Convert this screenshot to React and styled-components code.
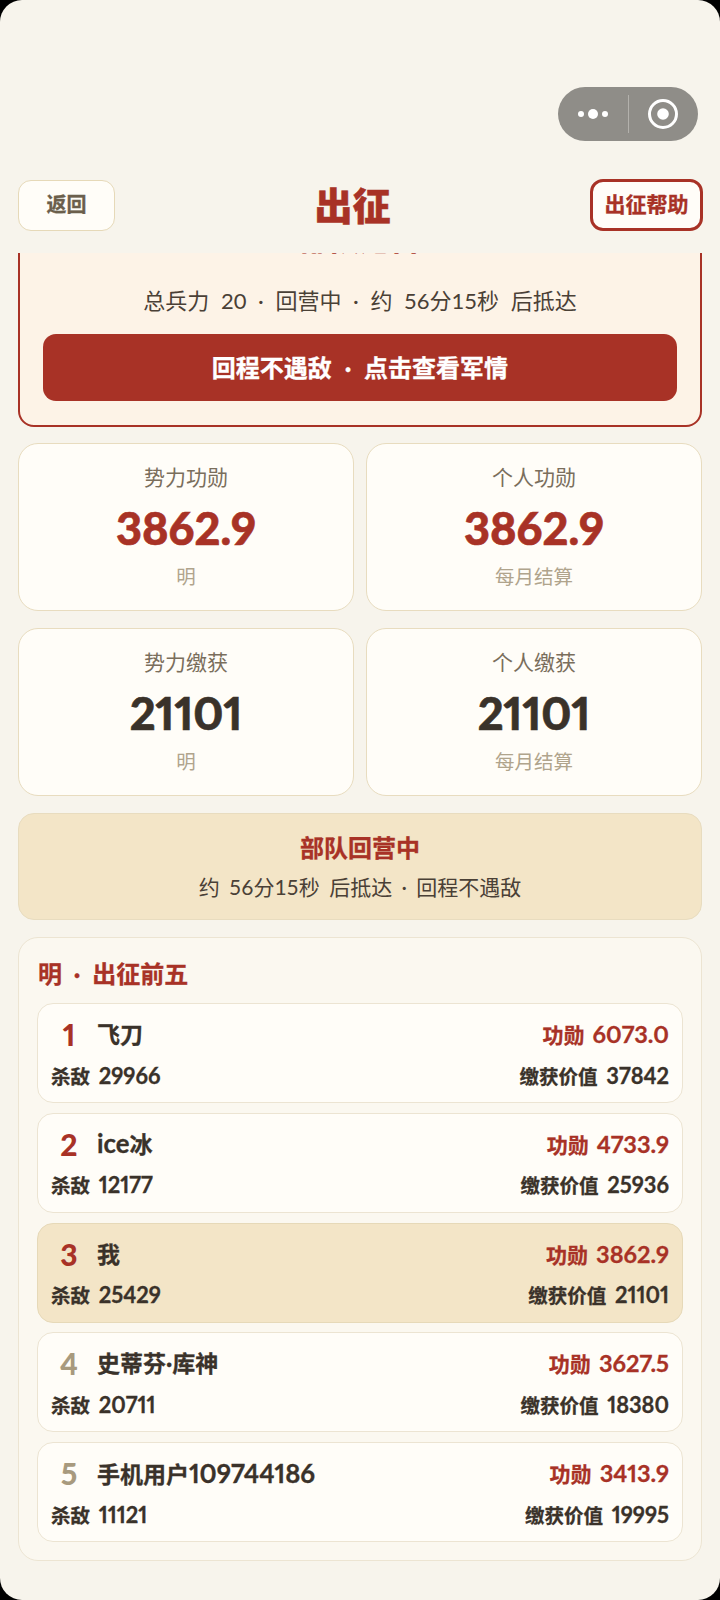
import React from 'react';
import styled, { createGlobalStyle } from 'styled-components';

const FONT = `Lato, "Noto Sans CJK SC", sans-serif`;
const RED = '#a83226';
const INK = '#3a322a';

const stats = [
  { label: '势力功勋', value: '3862.9', note: '明', accent: true },
  { label: '个人功勋', value: '3862.9', note: '每月结算', accent: true },
  { label: '势力缴获', value: '21101', note: '明' },
  { label: '个人缴获', value: '21101', note: '每月结算' },
];

const ranking = [
  { rank: 1, name: '飞刀', merit: '6073.0', kills: 29966, loot: 37842 },
  { rank: 2, name: 'ice冰', merit: '4733.9', kills: 12177, loot: 25936 },
  { rank: 3, name: '我', merit: '3862.9', kills: 25429, loot: 21101, me: true },
  { rank: 4, name: '史蒂芬·库神', merit: '3627.5', kills: 20711, loot: 18380 },
  { rank: 5, name: '手机用户109744186', merit: '3413.9', kills: 11121, loot: 19995 },
];

// latin letters and digits run a bit larger than the chinese next to them
function latinBig(text) {
  return text.split(/([0-9a-zA-Z.]+)/).map((part, i) =>
    i % 2 === 1 ? <Latin key={i}>{part}</Latin> : part
  );
}

export default function App() {
  return (
    <React.Fragment>
      <GlobalStyle />
      <Page>
        <CapsuleBar>
          <Capsule>
            <CapsuleSlot>
              <svg width="44" height="20" viewBox="0 0 44 20">
                <circle cx="10" cy="10" r="3" fill="#fff" />
                <circle cx="22" cy="10" r="5" fill="#fff" />
                <circle cx="34" cy="10" r="3" fill="#fff" />
              </svg>
            </CapsuleSlot>
            <CapsuleDivider />
            <CapsuleSlot>
              <svg width="32" height="32" viewBox="0 0 32 32">
                <circle cx="16" cy="16" r="13.5" fill="none" stroke="#fff" strokeWidth="3" />
                <circle cx="16" cy="16" r="5.8" fill="#fff" />
              </svg>
            </CapsuleSlot>
          </Capsule>
        </CapsuleBar>

        <NavBar>
          <BackButton>返回</BackButton>
          <NavTitle>出征</NavTitle>
          <HelpButton>出征帮助</HelpButton>
        </NavBar>

        <ScrollArea>
          <HeroCard>
            <HeroTitle>部队返营</HeroTitle>
            <HeroLine>总兵力 20 · 回营中 · 约 56分15秒 后抵达</HeroLine>
            <HeroButton>回程不遇敌 · 点击查看军情</HeroButton>
          </HeroCard>

          <StatGrid>
            {stats.map((s) => (
              <StatCard key={s.label}>
                <StatLabel>{s.label}</StatLabel>
                <StatValue $accent={s.accent}>{s.value}</StatValue>
                <StatNote>{s.note}</StatNote>
              </StatCard>
            ))}
          </StatGrid>

          <ReturnBanner>
            <BannerTitle>部队回营中</BannerTitle>
            <BannerLine>约 56分15秒 后抵达 · 回程不遇敌</BannerLine>
          </ReturnBanner>

          <RankPanel>
            <PanelTitle>明 · 出征前五</PanelTitle>
            <RankList>
              {ranking.map((r) => (
                <RankRow key={r.rank} $me={r.me}>
                  <RowLine>
                    <Who>
                      <RankNo $top={r.rank <= 3}>{r.rank}</RankNo>
                      <PlayerName>{latinBig(r.name)}</PlayerName>
                    </Who>
                    <Merit>{latinBig(`功勋 ${r.merit}`)}</Merit>
                  </RowLine>
                  <RowLine>
                    <Detail>{latinBig(`杀敌 ${r.kills}`)}</Detail>
                    <Detail>{latinBig(`缴获价值 ${r.loot}`)}</Detail>
                  </RowLine>
                </RankRow>
              ))}
            </RankList>
          </RankPanel>
        </ScrollArea>
      </Page>
    </React.Fragment>
  );
}

const GlobalStyle = createGlobalStyle`
  html, body {
    margin: 0;
    padding: 0;
    background: #000;
  }
  * {
    box-sizing: border-box;
  }
`;

const Page = styled.div`
  width: 720px;
  height: 1600px;
  overflow: hidden;
  background: #f7f4ec;
  border-radius: 22px;
  font-family: ${FONT};
  font-feature-settings: 'pnum' 1, 'lnum' 1;
  word-spacing: 6px;
  color: ${INK};
  display: flex;
  flex-direction: column;
`;

const Latin = styled.span`
  font-size: 1.12em;
`;

const CapsuleBar = styled.div`
  display: flex;
  justify-content: flex-end;
  padding: 87px 22px 0 0;
`;

const Capsule = styled.div`
  width: 140px;
  height: 54px;
  border-radius: 27px;
  background: #8f8d88;
  display: flex;
  align-items: center;
`;

const CapsuleSlot = styled.div`
  flex: 1;
  display: flex;
  justify-content: center;
  align-items: center;
`;

const CapsuleDivider = styled.div`
  width: 1px;
  height: 38px;
  background: #b3b1ac;
`;

const NavBar = styled.div`
  flex: none;
  height: 112px;
  display: flex;
  justify-content: space-between;
  align-items: flex-start;
  padding: 38px 17px 0 18px;
`;

const BackButton = styled.div`
  width: 97px;
  height: 51px;
  margin-top: 1px;
  padding-bottom: 4px;
  border: 1.5px solid #e6d9b8;
  border-radius: 13px;
  background: #fffdf8;
  color: #6b5f4c;
  font-size: 20px;
  font-weight: 700;
  -webkit-text-stroke: 0.3px #6b5f4c;
  display: flex;
  justify-content: center;
  align-items: center;
`;

const NavTitle = styled.div`
  color: ${RED};
  font-size: 38px;
  line-height: 52px;
  font-weight: 900;
  -webkit-text-stroke: 0.5px ${RED};
`;

const HelpButton = styled.div`
  width: 113px;
  height: 52px;
  padding-bottom: 4px;
  border: 3px solid ${RED};
  border-radius: 13px;
  background: #fffdf8;
  color: ${RED};
  font-size: 21px;
  font-weight: 700;
  -webkit-text-stroke: 0.3px ${RED};
  display: flex;
  justify-content: center;
  align-items: center;
`;

const ScrollArea = styled.div`
  flex: 1;
  overflow: hidden;
  padding: 0 18px;
`;

/* scrolled part way under the nav bar */
const HeroCard = styled.div`
  margin-top: -59px;
  height: 233px;
  border: 2px solid ${RED};
  border-radius: 16px;
  background: #fdf3e7;
  padding: 0 23px 24px;
  display: flex;
  flex-direction: column;
  justify-content: flex-end;
`;

const HeroTitle = styled.div`
  color: ${RED};
  font-size: 30px;
  font-weight: 900;
  line-height: 30px;
  text-align: center;
  margin-bottom: 32px;
`;

const HeroLine = styled.div`
  font-size: 22px;
  font-feature-settings: normal;
  word-spacing: 6px;
  line-height: 32px;
  text-align: center;
  color: #4a4036;
  margin-bottom: 17px;
`;

const HeroButton = styled.div`
  height: 67px;
  padding-bottom: 3px;
  border-radius: 13px;
  background: ${RED};
  color: #fff;
  font-size: 24px;
  font-weight: 700;
  word-spacing: 7px;
  -webkit-text-stroke: 0.3px #fff;
  display: flex;
  justify-content: center;
  align-items: center;
`;

const StatGrid = styled.div`
  display: grid;
  grid-template-columns: 336px 336px;
  gap: 17px 12px;
  margin-top: 16px;
`;

const StatCard = styled.div`
  height: 168px;
  border: 1.5px solid #e8dcbf;
  border-radius: 20px;
  background: #fffdf8;
  display: flex;
  flex-direction: column;
  align-items: center;
  padding-top: 18px;
`;

const StatLabel = styled.div`
  font-size: 21px;
  line-height: 30px;
  color: #7a6e5c;
`;

const StatValue = styled.div`
  font-size: 45px;
  font-weight: 900;
  line-height: 56px;
  margin-top: 8px;
  -webkit-text-stroke: 0.6px ${(props) => (props.$accent ? RED : INK)};
  color: ${(props) => (props.$accent ? RED : INK)};
`;

const StatNote = styled.div`
  font-size: 19.5px;
  line-height: 28px;
  margin-top: 7px;
  color: #b0a48c;
`;

const ReturnBanner = styled.div`
  height: 107px;
  margin-top: 17px;
  border: 1.5px solid #e8dcbf;
  border-radius: 16px;
  background: #f3e5c7;
  display: flex;
  flex-direction: column;
  align-items: center;
  padding-top: 17px;
`;

const BannerTitle = styled.div`
  color: ${RED};
  font-size: 24px;
  font-weight: 700;
  -webkit-text-stroke: 0.3px ${RED};
  line-height: 34px;
`;

const BannerLine = styled.div`
  font-size: 21px;
  font-feature-settings: normal;
  word-spacing: 4px;
  line-height: 30px;
  margin-top: 7px;
  color: #4a4036;
`;

const RankPanel = styled.div`
  height: 624px;
  margin-top: 17px;
  border: 1.5px solid #ece4d2;
  border-radius: 20px;
  background: #fbf8f0;
  padding: 19px 18px 0 18px;
`;

const PanelTitle = styled.div`
  color: ${RED};
  font-size: 24px;
  font-weight: 700;
  -webkit-text-stroke: 0.3px ${RED};
  line-height: 34px;
  margin-bottom: 12px;
  padding-left: 1px;
`;

const RankList = styled.div`
  display: flex;
  flex-direction: column;
  gap: 9.75px;
`;

const RankRow = styled.div`
  height: 100px;
  border: 1.5px solid ${(props) => (props.$me ? '#e6d9b8' : '#ece4d2')};
  border-radius: 16px;
  background: ${(props) => (props.$me ? '#f3e5c7' : '#fffdf8')};
  padding: 12px 13px 0 13px;
  display: flex;
  flex-direction: column;
  gap: 9px;
  word-spacing: 4px;
`;

const RowLine = styled.div`
  display: flex;
  justify-content: space-between;
  align-items: center;
  height: 36px;
  &:last-child {
    height: 30px;
  }
`;

const Who = styled.div`
  display: flex;
  align-items: center;
`;

const RankNo = styled.div`
  width: 36px;
  margin-right: 10px;
  text-align: center;
  font-size: 30px;
  font-weight: 900;
  line-height: 36px;
  color: ${(props) => (props.$top ? RED : '#a89a7e')};
`;

const PlayerName = styled.div`
  font-size: 23px;
  font-weight: 700;
  -webkit-text-stroke: 0.3px ${INK};
  line-height: 36px;
`;

const Merit = styled.div`
  font-size: 21px;
  font-weight: 700;
  word-spacing: 3px;
  -webkit-text-stroke: 0.3px ${RED};
  color: ${RED};
`;

const Detail = styled.div`
  font-size: 19.5px;
  font-weight: 700;
  -webkit-text-stroke: 0.3px ${INK};
  line-height: 30px;
`;
